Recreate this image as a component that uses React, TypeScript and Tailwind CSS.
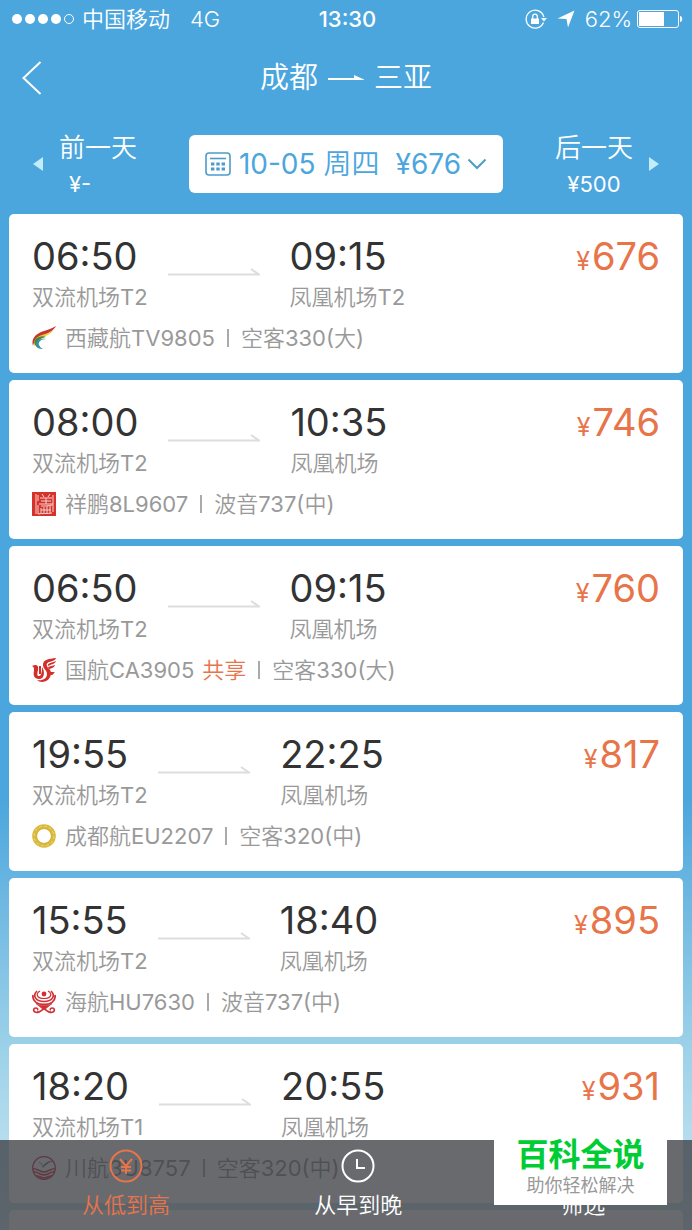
import { useState } from "react";
import type { ReactNode } from "react";
import { clsx } from "clsx";

type Flight = {
    depart: string;
    from: string;
    arrive: string;
    to: string;
    price: number;
    airline: string;
    shared?: boolean;
    plane: string;
    logo: ReactNode;
};

function TibetLogo() {
    return (
        <svg viewBox="0 0 24 24" className="size-6 shrink-0" fill="none">
            <path d="M24 0C22 4 17 7 11 10 6 12 2 15 1 20-1 13 3 9 9 6c5-2 10-3 15-6z" fill="#c8372d" />
            <path d="M22 4C18 8 14 10 10 12 6 14 3 16 3 21 0 15 4 11 10 9c4-1 8-3 12-5z" fill="#efc93a" />
            <path d="M14 11C8 12 4 15 6 22 1 18 1 13 7 11c3-1 5-1 7 0z" fill="#3f8a3c" />
            <path d="M14 13c-5 0-8 3-7 6 1 2 2 3 4 4-4 0-6-1-7-4-1-4 4-7 10-6z" fill="#3a8fa5" />
        </svg>
    );
}

function LuckyLogo() {
    return (
        <svg viewBox="0 0 24 24" className="size-6 shrink-0" fill="none">
            <path d="M0 0h24v24H0z" fill="#d5322c" />
            <g stroke="#f6d5d2" strokeWidth="1">
                <path d="M4 2v20M6 3v6M6 13v9" />
                <path d="M10 2l2 3M18 2l-2 3M8 6h12M9 9h10M7 12h14M14 6v6" />
                <path d="M9 14c4 0 7 0 11-1M9 16v5M12 15v6M15 14v7M18 14v7M9 18h10" />
                <path d="M6 22c4-1 9 0 14-1M21 3v17" />
            </g>
        </svg>
    );
}

function AirChinaLogo() {
    return (
        <svg viewBox="0 0 24 24" className="size-6 shrink-0" fill="#d22f2b">
            <path d="M24 0c-1 3-4 3-7 4-2 1-3 2-2 4 1 3 4 3 4 7 0 5-4 9-9 9-2 0-4-1-5-2 5 1 10-1 10-6 0-4-4-5-4-9 0-6 6-6 13-7z" />
            <path d="M24 3c-1 3-4 3-8 5-1-3 3-3 8-5z" />
            <path d="M23 7c-1 3-3 3-6 4l-1-2c2-1 5-1 7-2z" />
            <path d="M0 8c4-2 7-1 6 4-1 4-1 6 1 6s3-3 3-9c3 4 3 12-3 12-5 0-6-4-5-8 0-3 0-4-2-5z" />
            <path d="M7 8h2v8H7z" />
            <path d="M18 14h5c-2 1-1 3-4 3z" />
        </svg>
    );
}

function ChengduLogo() {
    return (
        <svg viewBox="0 0 24 24" className="size-6 shrink-0" fill="none">
            <circle cx="12" cy="12" r="9.5" stroke="#d9b93b" strokeWidth="4.6" />
            <circle cx="12" cy="12" r="9.8" stroke="#efdf92" strokeWidth="0.8" strokeDasharray="3 2.1" />
            <circle cx="12" cy="12" r="7.4" stroke="#cfae30" strokeWidth="0.8" />
        </svg>
    );
}

function HainanLogo() {
    return (
        <svg viewBox="0 0 24 24" className="size-6 shrink-0" fill="none" stroke="#cf3136">
            <circle cx="12" cy="4" r="2.4" fill="#cf3136" stroke="none" />
            <path d="M8 1C3 4 5 8.500 12 8.500s9-4.500 4-7.500" strokeWidth="1.2" />
            <path d="M5 1c-5 5-1 10.500 7 10.500S24 6 19 1" strokeWidth="1.6" />
            <path d="M1 5c-1 7 5 9.500 11 9.500S24 12 23 5" strokeWidth="1.8" />
            <path d="M4 13.500c3 3 13 3 16 0L12 20z" fill="#cf3136" strokeWidth="0.8" />
            <path d="M12 18c-3 4-7 5-9 4s-2-4 1-4c2 0 2 2 1 2M12 18c3 4 7 5 9 4s2-4-1-4c-2 0-2 2-1 2" strokeWidth="1.7" />
        </svg>
    );
}

function SichuanLogo() {
    return (
        <svg viewBox="0 0 24 24" className="size-6 shrink-0" fill="none">
            <circle cx="12" cy="12" r="11.3" stroke="#cf3148" strokeWidth="1.2" />
            <path d="M6 6c3 0 4 2 5 4 2-3 5-5 10-5-5 2-8 4-10 7-1-3-2-5-5-6z" fill="#777" />
            <path d="M1 13c4-1 6 3 11 3s7-4 11-3M1 16c4-1 6 3 11 3s7-4 11-3M4 20c3-1 5 2 8 2s5-3 8-2" stroke="#cf3148" strokeWidth="1.4" />
        </svg>
    );
}

const flights: Flight[] = [
    { depart: "06:50", from: "双流机场T2", arrive: "09:15", to: "凤凰机场T2", price: 676, airline: "西藏航TV9805", plane: "空客330(大)", logo: <TibetLogo /> },
    { depart: "08:00", from: "双流机场T2", arrive: "10:35", to: "凤凰机场", price: 746, airline: "祥鹏8L9607", plane: "波音737(中)", logo: <LuckyLogo /> },
    { depart: "06:50", from: "双流机场T2", arrive: "09:15", to: "凤凰机场", price: 760, airline: "国航CA3905", shared: true, plane: "空客330(大)", logo: <AirChinaLogo /> },
    { depart: "19:55", from: "双流机场T2", arrive: "22:25", to: "凤凰机场", price: 817, airline: "成都航EU2207", plane: "空客320(中)", logo: <ChengduLogo /> },
    { depart: "15:55", from: "双流机场T2", arrive: "18:40", to: "凤凰机场", price: 895, airline: "海航HU7630", plane: "波音737(中)", logo: <HainanLogo /> },
    { depart: "18:20", from: "双流机场T1", arrive: "20:55", to: "凤凰机场", price: 931, airline: "川航3U8757", plane: "空客320(中)", logo: <SichuanLogo /> },
];

function StatusBar() {
    return (
        <div className="grid h-[38px] grid-cols-[1fr_auto_1fr] items-center pr-[9px] pl-3 text-[22px] leading-[26px]">
            <div className="flex items-center">
                <svg viewBox="0 0 62 12" className="h-3 w-[62px]" fill="#fff">
                    <circle cx="5" cy="6" r="5" />
                    <circle cx="18" cy="6" r="5" />
                    <circle cx="31" cy="6" r="5" />
                    <circle cx="44" cy="6" r="5" />
                    <circle cx="57" cy="6" r="4.5" fill="none" stroke="#fff" />
                </svg>
                <span className="ml-2">中国移动</span>
                <span className="ml-5 font-light">4G</span>
            </div>
            <span className="font-medium">13:30</span>
            <div className="flex items-center justify-end">
                <svg viewBox="0 0 22 20" className="h-5 w-[22px]" fill="none" stroke="#fff" strokeWidth="1.3">
                    <path d="M18.5 13.5A9 9 0 1 1 18.9 8" />
                    <path d="M16 9h6l-3 3.5z" fill="#fff" stroke="none" />
                    <path d="M6 9.5h8V15H6z" fill="#fff" stroke="none" />
                    <path d="M7.7 10V7.5a2.3 2.3 0 0 1 4.6 0V10" />
                </svg>
                <svg viewBox="0 0 18 18" className="ml-[10px] size-[18px]" fill="#fff">
                    <path d="M17.500.5 11 17.500 9.500 9 .5 8.500z" />
                </svg>
                <span className="ml-[10px] font-light">62%</span>
                <svg viewBox="0 0 46 18" className="ml-[5px] h-[18px] w-[46px]" fill="none">
                    <rect x="0.5" y="0.5" width="41" height="17" rx="2.5" stroke="#fff" />
                    <path d="M2 2h25v14H2z" fill="#fff" />
                    <path d="M43 6c3 0 3 6 0 6z" fill="#fff" />
                </svg>
            </div>
        </div>
    );
}

function DayButton({ label, price, next = false }: { label: string; price: string; next?: boolean }) {
    return (
        <button type="button" className={clsx("flex items-center gap-4", next && "flex-row-reverse")}>
            <svg viewBox="0 0 10 14" className="h-[14px] w-[10px]" fill="#c3ecfb">
                <path d={next ? "M0 0v14l10-7z" : "M10 0v14L0 7z"} />
            </svg>
            <span className={clsx("flex flex-col pt-1", next ? "items-center" : "items-start")}>
                <span className="text-[26px] leading-8">{label}</span>
                <span className={clsx("mt-1 text-[22px] leading-8", !next && "pl-[10px]")}>{price}</span>
            </span>
        </button>
    );
}

function FlightCard({ flight }: { flight: Flight }) {
    return (
        <li className="rounded-[5px] bg-white px-[23px] py-[22px] text-[22px] leading-[26px] text-[#999]">
            <div className="flex items-start justify-between">
                <div className="flex items-start">
                    <div>
                        <div className="text-[38px] leading-10 text-[#333]">{flight.depart}</div>
                        <div className="mt-2 w-0 whitespace-nowrap">{flight.from}</div>
                    </div>
                    <svg viewBox="0 0 92 8" className="mx-[30px] mt-8 h-2 w-[92px]" fill="none" stroke="#ddd" strokeWidth="2">
                        <path d="M0 6.5h91L83 1" />
                    </svg>
                    <div>
                        <div className="text-[38px] leading-10 text-[#333]">{flight.arrive}</div>
                        <div className="mt-2 whitespace-nowrap">{flight.to}</div>
                    </div>
                </div>
                <div className="text-[38px] leading-10 text-[#e8744a]">
                    <span className="mr-[2px] text-[25px]">¥</span>
                    {flight.price}
                </div>
            </div>
            <div className="mt-[15px] flex items-center">
                {flight.logo}
                <span className="ml-[9px]">{flight.airline}</span>
                {flight.shared && <span className="ml-2 text-[#e8744a]">共享</span>}
                <span className="mx-3 h-[18px] w-[2px] bg-[#aaa]" />
                <span>{flight.plane}</span>
            </div>
        </li>
    );
}

const tabs = [
    {
        id: "price",
        label: "从低到高",
        icon: <path d="m11 10 6 7 6-7M17 17v8M12 18h10M12 21.500h10" />,
        ring: true,
    },
    { id: "time", label: "从早到晚", icon: <path d="M16 10v9h8" />, ring: true },
    { id: "filter", label: "筛选", icon: <path d="M6 6h22l-8 11v10l-6-4v-6z" />, ring: false },
];

export default function App() {
    const [sort, setSort] = useState("price");

    return (
        <div className="relative flex h-screen flex-col overflow-hidden bg-linear-to-b from-[#4ba6dd] from-65% via-[#9bd1e8] via-85% to-[#cfe8f3] font-['Inter','Noto_Sans_CJK_SC_DemiLight','Noto_Sans_CJK_SC',sans-serif] font-normal text-white">
            <StatusBar />
            <header className="grid h-20 grid-cols-[1fr_auto_1fr] items-center px-[22px]">
                <button type="button" aria-label="返回">
                    <svg viewBox="0 0 20 34" className="h-[34px] w-5" fill="none" stroke="#fff" strokeWidth="2">
                        <path d="M18.500 1 1.500 17l17 16" />
                    </svg>
                </button>
                <h1 className="flex items-center gap-[10px] text-[29px] leading-9">
                    <span>成都</span>
                    <svg viewBox="0 0 36 6" className="h-[6px] w-9" fill="#fff">
                        <path d="M0 3h26V0l10 4.500V5H0z" />
                    </svg>
                    <span>三亚</span>
                </h1>
            </header>

            <div className="flex items-center justify-between px-[33px] pt-[10px] pb-[14px]">
                <DayButton label="前一天" price="¥-" />
                <button type="button" className="flex h-[58px] items-center rounded-md bg-white px-4 text-[28px] leading-8 text-[#4ba6dd]">
                    <svg viewBox="0 0 26 24" className="h-6 w-[26px]" fill="none" stroke="#4b9ccb" strokeWidth="1.600">
                        <rect x="1" y="1" width="24" height="22" rx="3" />
                        <path d="M5 6.500h16" />
                        <path d="M6 12h14M6 17h14" strokeWidth="3.200" strokeDasharray="3.400 1.900" />
                    </svg>
                    <span className="ml-2">10-05</span>
                    <span className="ml-2">周四</span>
                    <span className="ml-4">¥676</span>
                    <svg viewBox="0 0 20 12" className="ml-[6px] h-3 w-5" fill="none" stroke="#4b9ccb" strokeWidth="2">
                        <path d="m1.500 1.500 8.500 8.500 8.500-8.500" />
                    </svg>
                </button>
                <DayButton label="后一天" price="¥500" next />
            </div>

            <ul className="flex flex-1 flex-col gap-[7px] overflow-y-auto px-[9px] [scrollbar-width:none]">
                {flights.map((flight) => (
                    <FlightCard key={flight.airline} flight={flight} />
                ))}
                <li aria-hidden="true" className="h-[159px] shrink-0 rounded-[5px] bg-white" />
            </ul>

            <nav className="absolute inset-x-0 bottom-0 grid h-[90px] grid-cols-[16fr_16fr_15fr] bg-[#37383d]/75 pl-[10px]">
                {tabs.map((tab) => (
                    <button
                        key={tab.id}
                        type="button"
                        onClick={() => setSort(tab.id)}
                        className={clsx(
                            "flex flex-col items-center pt-[9px] text-[22px] leading-[26px]",
                            sort === tab.id ? "text-[#e8744a]" : "text-white"
                        )}
                    >
                        <svg viewBox="0 0 34 34" className="size-[34px]" fill="none" stroke="currentColor" strokeWidth="2">
                            {tab.ring && <circle cx="17" cy="17" r="15.500" />}
                            {tab.icon}
                        </svg>
                        <span className="mt-[9px]">{tab.label}</span>
                    </button>
                ))}
            </nav>

            <aside className="absolute right-[25px] bottom-[25px] flex w-[173px] flex-col items-center bg-white pb-[6px] font-['Inter','Noto_Sans_CJK_SC',sans-serif]">
                <strong className="text-[32px] leading-9 font-bold text-[#0c3]">百科全说</strong>
                <span className="text-[18px] leading-[26px] text-[#999]">助你轻松解决</span>
            </aside>
        </div>
    );
}
